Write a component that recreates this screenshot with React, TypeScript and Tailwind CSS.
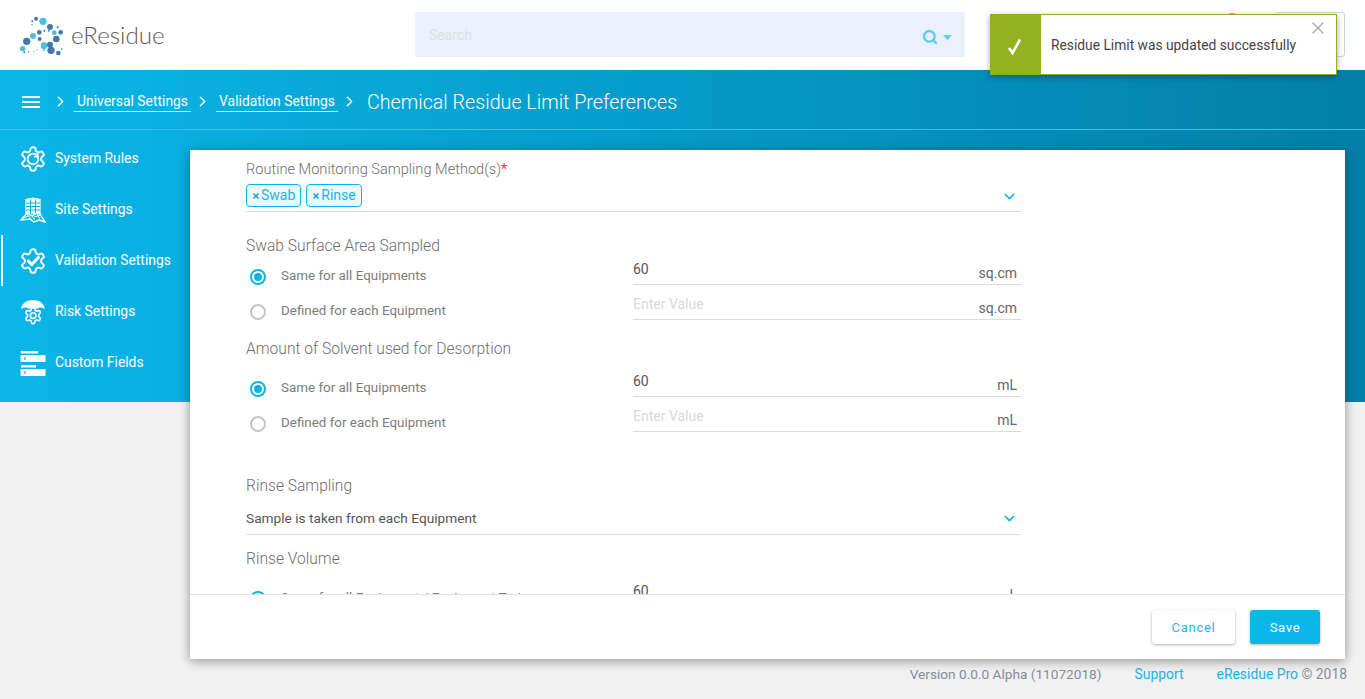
import { ChevronDown, ChevronRight, Search, X } from "lucide-react";

const gearPath =
  "M12.22 2h-.44a2 2 0 0 0-2 2v.18a2 2 0 0 1-1 1.73l-.43.25a2 2 0 0 1-2 0l-.15-.08a2 2 0 0 0-2.73.73l-.22.38a2 2 0 0 0 .73 2.73l.15.1a2 2 0 0 1 1 1.72v.51a2 2 0 0 1-1 1.74l-.15.09a2 2 0 0 0-.73 2.73l.22.38a2 2 0 0 0 2.73.73l.15-.08a2 2 0 0 1 2 0l.43.25a2 2 0 0 1 1 1.73V20a2 2 0 0 0 2 2h.44a2 2 0 0 0 2-2v-.18a2 2 0 0 1 1-1.73l.43-.25a2 2 0 0 1 2 0l.15.08a2 2 0 0 0 2.73-.73l.22-.39a2 2 0 0 0-.73-2.73l-.15-.08a2 2 0 0 1-1-1.74v-.5a2 2 0 0 1 1-1.74l.15-.09a2 2 0 0 0 .73-2.73l-.22-.38a2 2 0 0 0-2.73-.73l-.15.08a2 2 0 0 1-2 0l-.43-.25a2 2 0 0 1-1-1.73V4a2 2 0 0 0-2-2z";

const logoDots = [
  [128, 60, 11, 1], [107, 52, 6, 0], [149, 77, 9, 0], [181, 93, 7, 0], [162, 94, 7, 1],
  [117, 93, 7, 0], [98, 104, 9, 1], [168, 113, 10, 0], [118, 113, 6, 0], [79, 120, 11, 0],
  [131, 133, 10, 1], [149, 130, 9, 0], [152, 147, 11, 0], [174, 155, 7, 0], [67, 142, 8, 1],
  [184, 143, 3, 1], [96, 60, 3, 0], [95, 70, 2, 0], [172, 78, 3, 0], [145, 88, 3, 0],
  [132, 88, 3, 0], [72, 153, 3, 0], [85, 152, 2, 0], [110, 146, 2, 1], [100, 150, 2, 1],
  [130, 146, 3, 1],
];

function Logo() {
  return (
    <svg width="50" height="45" viewBox="50 35 150 135">
      {logoDots.map(([cx, cy, r, light], i) => (
        <circle key={i} cx={cx} cy={cy} r={r} fill={light ? "#52bdd6" : "#4478ab"} />
      ))}
    </svg>
  );
}

function GearIcon({ children }: { children?: React.ReactNode }) {
  return (
    <svg width="26" height="26" viewBox="1 1 22 22" fill="none" stroke="white" strokeWidth="1.6" strokeLinecap="round" strokeLinejoin="round">
      <path d={gearPath} />
      {children}
    </svg>
  );
}

function SiteIcon() {
  return (
    <svg width="26" height="26" viewBox="0 0 26 26" fill="none" stroke="white" strokeWidth="1.2">
      <path d="M6 17V2.500l7-1.500 7 1.500V17" fill="white" />
      <path d="M6 6h14M6 9.500h14M6 13h14M10.500 2.500V17M15.500 2.500V17" stroke="#08b2e2" strokeWidth="1" />
      <path d="M1 23l6-7 5 3 5-3 3 1 5 8-6-2-5 2-4-3z" fill="#08b2e2" strokeWidth="1.400" />
      <path d="M7 17l4 5M12 19l3 4M17 17l3 5M3 21l5-2M14 20l7-2" strokeWidth="1" />
    </svg>
  );
}

function RiskIcon() {
  return (
    <svg width="26" height="26" viewBox="0 0 26 26" fill="none">
      <path d="M1 10C2 4 7 1 13 1s11 3 12 9c-3-2-6-2-8 0-2-1-6-1-8 0-2-2-5-2-8 0z" fill="white" />
      <g transform="translate(3.500 7) scale(0.8)" stroke="white" strokeWidth="2">
        <path d={gearPath} />
        <circle cx="12" cy="12" r="3.500" />
      </g>
    </svg>
  );
}

function FieldsIcon() {
  return (
    <svg width="26" height="26" viewBox="0 0 26 26">
      <rect x="1" y="1" width="17" height="2.500" fill="white" />
      <rect x="0.500" y="5" width="25" height="7" fill="white" />
      <rect x="1" y="15" width="15" height="2.500" fill="white" />
      <rect x="0.500" y="19" width="25" height="7" fill="white" />
      <path d="M5 7v3M5 21v3" stroke="#4478ab" strokeWidth="1" />
    </svg>
  );
}

const navItems = [
  { label: "System Rules", icon: <GearIcon><path d="M15.900 9.800a4.500 4.500 0 1 1-1.500-1.600M16 7.500v2.500h-2.500" strokeWidth="1.500" /></GearIcon> },
  { label: "Site Settings", icon: <SiteIcon /> },
  { label: "Validation Settings", icon: <GearIcon><path d="M8 12l3 3 5.500-6" strokeWidth="2.600" /></GearIcon>, active: true },
  { label: "Risk Settings", icon: <RiskIcon /> },
  { label: "Custom Fields", icon: <FieldsIcon /> },
];

function Crumb({ label }: { label: string }) {
  return (
    <>
      <span className="px-[3px] pb-[1px] border-b border-white text-[13.9px] leading-[18px] mt-[4px] text-white">{label}</span>
      <ChevronRight size={17} strokeWidth={2} className="text-white ml-[3px] mr-[5px] mt-[3px]" />
    </>
  );
}

function Chip({ label }: { label: string }) {
  return (
    <span className="flex items-center h-[23px] px-[5px] gap-[1px] rounded-[4px] border border-[#0ab4e6] bg-[#ecfaff] text-[14px] text-[#19b5e6]">
      <X size={8} strokeWidth={5} className="text-[#19a5d8]" />
      {label}
    </span>
  );
}

function ChoiceRow({ label, checked, value, unit }: { label: string; checked?: boolean; value?: string; unit: string }) {
  return (
    <div className="flex h-[35px] items-start">
      <div className="w-[387px] h-[35px] flex items-center pl-[4px] gap-[15px] text-[13.4px] text-[#7c7c7c]">
        {checked ? (
          <span className="w-4 h-4 rounded-full border-2 border-[#0ab4e6] flex items-center justify-center">
            <span className="w-2 h-2 rounded-full bg-[#0ab4e6]" />
          </span>
        ) : (
          <span className="w-4 h-4 rounded-full border-2 border-[#c4c4c4]" />
        )}
        <span>{label}</span>
      </div>
      <div className="w-[388px] h-[26px] border-b border-[#dcdcdc] flex justify-between pr-1 text-[14px]">
        {value ? (
          <span className="leading-[20px] text-[#555]">{value}</span>
        ) : (
          <span className="leading-[20px] text-[#d8d8d8]">Enter Value</span>
        )}
        <span className="leading-[20px] mt-[4px] text-[#666]">{unit}</span>
      </div>
    </div>
  );
}

function Heading({ children, className }: { children: React.ReactNode; className?: string }) {
  return <div className={`h-5 leading-[22px] text-[15.6px] font-light text-[#6e6e6e] ${className ?? ""}`}>{children}</div>;
}

export default function App() {
  return (
    <div className="relative h-screen overflow-hidden bg-[#f1f1f1] font-['Roboto',sans-serif] flex flex-col">
      {/* top bar */}
      <header className="h-[70px] bg-white flex items-center relative shrink-0">
        <div className="flex items-center pl-[17px] w-[415px]">
          <Logo />
          <span className="ml-[4px] font-['Lato',sans-serif] font-light text-[24.2px] text-[#5a5a5a]">eResidue</span>
        </div>
        <div className="w-[550px] h-[45px] bg-[#eaf1fb] rounded-[2px] flex items-center pl-[14px] pr-[13px] text-[14px] text-[#dcdfe6] mt-[-1px]">
          <span className="flex-1 mt-[1px]">Search</span>
          <Search size={16} strokeWidth={3.500} className="text-[#5fcdf3] mt-[5px]" />
          <svg width="9" height="5" viewBox="0 0 9 5" className="ml-[5px] mt-[5px]">
            <path d="M0 0h9L4.500 5z" fill="#5fcdf3" />
          </svg>
        </div>
        <div className="ml-auto flex items-center mr-[20px] mb-[2px]">
          <span className="w-[16px] h-[16px] rounded-full bg-[#f0a040] mb-[26px]" />
          <span className="w-[70px] h-[45px] ml-[35px] rounded-[3px] border border-[#c8d6e2]" />
        </div>
      </header>

      {/* toast */}
      <div className="absolute left-[990px] top-[14px] z-20 w-[347px] h-[61px] flex border border-[#94b01e] bg-white shadow-[0_2px_6px_rgba(0,0,0,0.35)]">
        <div className="w-[50px] bg-[#93b120] flex items-center justify-center">
          <svg width="15" height="17" viewBox="0 0 15 17" fill="none" stroke="white" strokeWidth="2.600" className="mr-[4px] mt-[3px]">
            <path d="M2 10l3.500 5L13 1.500" />
          </svg>
        </div>
        <div className="flex-1 pl-[10px] pt-[21px] leading-[18px] text-[13.8px] text-[#444]">Residue Limit was updated successfully</div>
        <X size={20} strokeWidth={1.500} className="absolute right-[8px] top-[3px] text-[#a5a5a5]" />
      </div>

      <main className="relative flex-1">
        <div className="absolute inset-x-0 top-0 h-[332px] bg-gradient-to-r from-[#0ab6e8] to-[#037fa9]" />
        <div className="relative flex flex-col h-full">
          {/* breadcrumb */}
          <div className="h-[60px] border-b border-[#35c3ea] flex items-center pl-[22px] shrink-0">
            <svg width="18" height="12" viewBox="0 0 18 12" className="mr-[12px] mt-[4px]">
              <path d="M0 1h18M0 6h18M0 11h18" stroke="white" strokeWidth="2" />
            </svg>
            <ChevronRight size={17} strokeWidth={2} className="text-white mr-[5px] mt-[3px]" />
            <Crumb label="Universal Settings" />
            <Crumb label="Validation Settings" />
            <span className="ml-[4px] mt-[6px] text-[19.7px] font-light text-white">Chemical Residue Limit Preferences</span>
          </div>

          <div className="flex">
            {/* side nav */}
            <nav className="w-[190px] pt-[3px] shrink-0">
              {navItems.map((item) => (
                <div key={item.label} className="relative h-[51px] flex items-center pl-[20px] gap-[9px] text-[13.9px] text-white">
                  {item.active && <span className="absolute left-[1px] top-0 w-[2px] h-[51px] bg-white" />}
                  {item.icon}
                  <span>{item.label}</span>
                </div>
              ))}
            </nav>

            {/* settings card */}
            <div className="flex-1 mr-[20px] mt-[20px] h-[509px] bg-white shadow-[0_2px_10px_rgba(0,0,0,0.4)] flex flex-col">
              <div className="h-[444px] overflow-hidden pl-[56px] pt-[9px]">
                <div className="w-[775px]">
                  <Heading className="text-[14.6px]! leading-5!">
                    Routine Monitoring Sampling Method(s)<span className="text-[#f0402f] font-normal">*</span>
                  </Heading>
                  <div className="mt-[5px] h-[28px] border-b border-[#dcdcdc] flex items-start justify-between pr-[3px]">
                    <div className="flex gap-[5px]">
                      <Chip label="Swab" />
                      <Chip label="Rinse" />
                    </div>
                    <ChevronDown size={17} strokeWidth={2} className="text-[#0ab4e6] mt-[4px]" />
                  </div>

                  <Heading className="mt-[23px]">Swab Surface Area Sampled</Heading>
                  <div className="mt-[4px]">
                    <ChoiceRow label="Same for all Equipments" checked value="60" unit="sq.cm" />
                    <ChoiceRow label="Defined for each Equipment" unit="sq.cm" />
                  </div>

                  <Heading className="mt-[9px]">Amount of Solvent used for Desorption</Heading>
                  <div className="mt-[13px]">
                    <ChoiceRow label="Same for all Equipments" checked value="60" unit="mL" />
                    <ChoiceRow label="Defined for each Equipment" unit="mL" />
                  </div>

                  <Heading className="mt-[34px]">Rinse Sampling</Heading>
                  <div className="h-[40px] w-[774px] border-b border-[#dcdcdc] flex items-start justify-between pt-[13px] pr-[2px] text-[13.7px] text-[#555]">
                    <span className="leading-[20px]">Sample is taken from each Equipment</span>
                    <ChevronDown size={17} strokeWidth={2} className="text-[#0ab4e6] mt-[2px]" />
                  </div>

                  <Heading className="mt-[13px]">Rinse Volume</Heading>
                  <div className="mt-[13px]">
                    <ChoiceRow label="Same for all Equipment / Equipment Train" checked value="60" unit="L" />
                  </div>
                </div>
              </div>
              <div className="flex-1 border-t border-[#e2e2e2] flex items-start justify-end gap-[15px] pt-[15px] pr-[25px]">
                <button className="w-[83px] h-[34px] pt-[1px] rounded-[3px] bg-white text-[13px] tracking-[0.7px] text-[#1fb6e8] shadow-[0_1px_3px_rgba(0,0,0,0.3)]">Cancel</button>
                <button className="w-[70px] h-[34px] pt-[1px] rounded-[3px] bg-[#0ab6ea] text-[13px] tracking-[0.7px] text-white shadow-[0_1px_3px_rgba(0,0,0,0.3)]">Save</button>
              </div>
            </div>
          </div>

          {/* footer */}
          <footer className="flex-1 flex items-center justify-end pr-[18px] pb-[10px] text-[13.9px] text-[#858c94]">
            <span className="text-[13.65px]">Version 0.0.0 Alpha (11072018)</span>
            <span className="ml-[33px] text-[#1fb0e6]">Support</span>
            <span className="ml-[33px]"><span className="text-[#1fb0e6]">eResidue Pro</span> © 2018</span>
          </footer>
        </div>
      </main>
    </div>
  );
}
